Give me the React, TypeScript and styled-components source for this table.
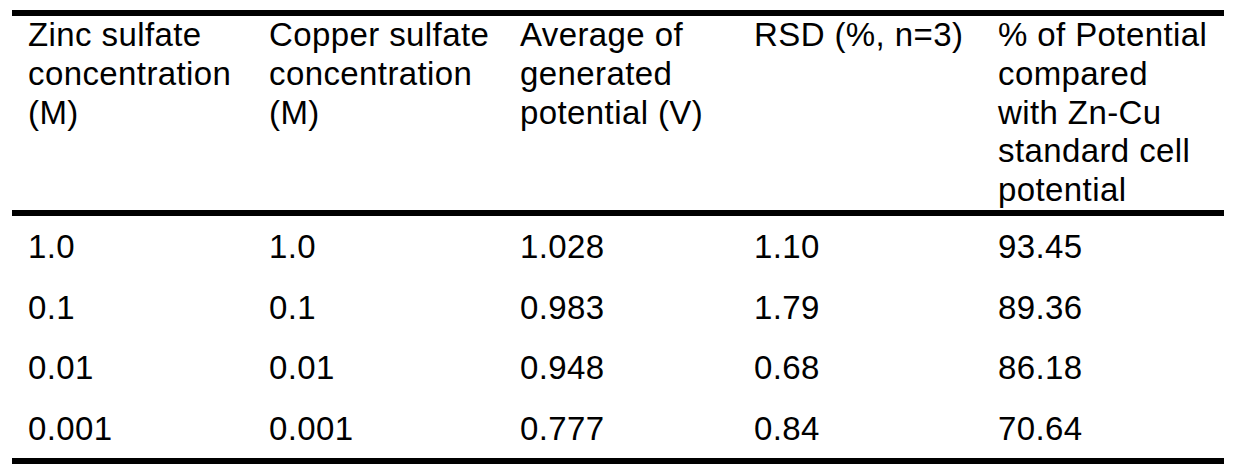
import React from 'react'
import styled, { createGlobalStyle } from 'styled-components'

const GlobalStyle = createGlobalStyle`
  html, body {
    margin: 0;
    padding: 0;
    background: #ffffff;
  }
  body {
    font-family: 'Liberation Sans', Arial, sans-serif;
    color: #000000;
  }
`

const Page = styled.div`
  width: 1244px;
  height: 476px;
  padding: 10px 20px 0 12px;
  box-sizing: border-box;
`

const Table = styled.div`
  display: grid;
  grid-template-columns: 241px 251px 234px 244px 242px;
  width: 1212px;
  border-top: 6px solid #000;
  border-bottom: 6px solid #000;
`

const HeadCell = styled.div`
  height: 194px;
  padding: 0 12px 0 16px;
  font-size: 33px;
  line-height: 38.8px;
  letter-spacing: 0.4px;
  border-bottom: 6px solid #000;
`

const Cell = styled.div`
  height: 60.5px;
  box-sizing: border-box;
  padding: 12px 12px 0 16px;
  font-size: 33px;
  line-height: 38.8px;
  letter-spacing: 0.4px;
  white-space: nowrap;
`

const headers = [
  'Zinc sulfate concentration (M)',
  'Copper sulfate concentration (M)',
  'Average of generated potential (V)',
  'RSD (%, n=3)',
  '% of Potential compared with Zn-Cu standard cell potential',
]

const rows = [
  ['1.0', '1.0', '1.028', '1.10', '93.45'],
  ['0.1', '0.1', '0.983', '1.79', '89.36'],
  ['0.01', '0.01', '0.948', '0.68', '86.18'],
  ['0.001', '0.001', '0.777', '0.84', '70.64'],
]

export default function App() {
  return (
    <>
      <GlobalStyle />
      <Page>
        <Table>
          {headers.map(h => (
            <HeadCell key={h}>{h}</HeadCell>
          ))}
          {rows.map((row, i) =>
            row.map((v, j) => <Cell key={`${i}-${j}`}>{v}</Cell>)
          )}
        </Table>
      </Page>
    </>
  )
}
